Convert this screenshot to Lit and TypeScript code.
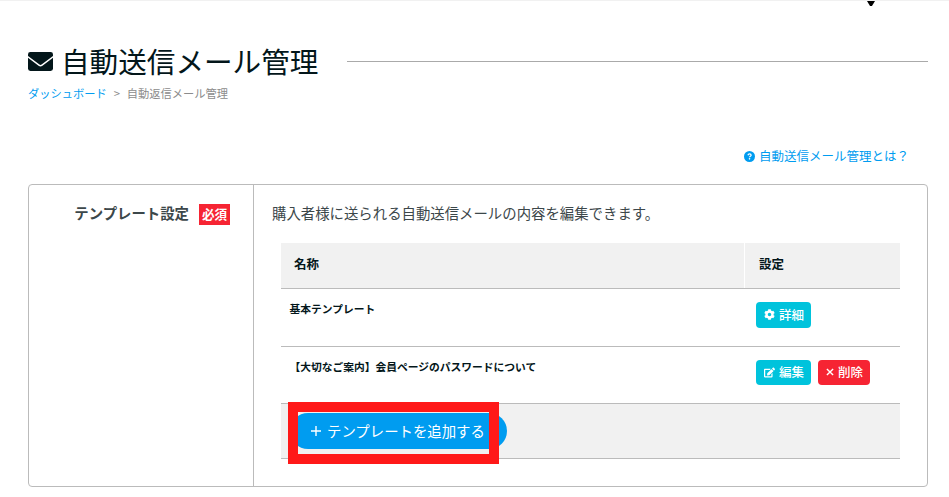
import { LitElement, html, css, svg } from "lit";
import { customElement } from "lit/decorators.js";

const envelope = svg`<svg class="envelope" viewBox="0 0 25 19"><rect width="25" height="19" rx="2.4" fill="#03161a"/><path d="M-.5 4.5 11 13.2Q12.5 14.3 14 13.2L25.5 4.5" fill="none" stroke="#fff" stroke-width="1.5"/></svg>`;

const question = svg`<svg class="question" viewBox="0 0 512 512"><circle cx="256" cy="256" r="256" fill="currentColor"/><path d="M182 196c12-38 40-58 78-58 42 0 72 24 72 58 0 52-72 44-72 100" fill="none" stroke="#fff" stroke-width="58"/><circle cx="258" cy="364" r="38" fill="#fff"/></svg>`;

const gear = svg`<svg class="icon" viewBox="0 0 512 512"><path fill="currentColor" d="M487.4 315.7l-42.6-24.6c4.3-23.2 4.3-47 0-70.2l42.6-24.6c4.9-2.8 7.1-8.6 5.5-14-11.1-35.6-30-67.8-54.7-94.6-3.8-4.1-10-5.1-14.8-2.3L380.8 110c-17.9-15.4-38.5-27.3-60.8-35.1V25.8c0-5.6-3.9-10.5-9.4-11.7-36.7-8.2-74.3-7.8-109.2 0-5.5 1.2-9.4 6.1-9.4 11.7V75c-22.2 7.9-42.8 19.8-60.8 35.1L88.7 85.5c-4.9-2.8-11-1.9-14.8 2.3-24.7 26.7-43.6 58.9-54.7 94.6-1.7 5.4.6 11.2 5.5 14L67.3 221c-4.3 23.2-4.3 47 0 70.2l-42.6 24.6c-4.9 2.8-7.1 8.6-5.5 14 11.1 35.6 30 67.8 54.7 94.6 3.8 4.1 10 5.1 14.8 2.3l42.6-24.6c17.9 15.4 38.5 27.3 60.8 35.1v49.2c0 5.6 3.9 10.5 9.4 11.7 36.7 8.2 74.3 7.8 109.2 0 5.5-1.2 9.4-6.1 9.4-11.7v-49.2c22.2-7.9 42.8-19.8 60.8-35.1l42.6 24.6c4.9 2.8 11 1.9 14.8-2.3 24.7-26.7 43.6-58.9 54.7-94.6 1.5-5.5-.7-11.3-5.6-14.1zM256 336c-44.1 0-80-35.9-80-80s35.9-80 80-80 80 35.9 80 80-35.9 80-80 80z"/></svg>`;

const edit = svg`<svg class="icon" viewBox="0 0 576 512"><path fill="currentColor" d="M402.6 83.2l90.2 90.2c3.8 3.8 3.8 10 0 13.8L274.4 405.6l-92.8 10.3c-12.4 1.4-22.9-9.1-21.5-21.5l10.3-92.8L388.8 83.2c3.8-3.8 10-3.8 13.8 0zm162-22.9l-48.8-48.8c-15.2-15.2-39.9-15.2-55.2 0l-35.4 35.4c-3.8 3.8-3.8 10 0 13.8l90.2 90.2c3.8 3.8 10 3.8 13.8 0l35.4-35.4c15.2-15.3 15.2-40 0-55.2zM384 346.2V448H64V128h229.8c3.2 0 6.2-1.3 8.5-3.5l40-40c7.6-7.6 2.2-20.5-8.5-20.5H48C21.5 64 0 85.5 0 112v352c0 26.5 21.5 48 48 48h352c26.5 0 48-21.5 48-48V306.2c0-10.7-12.9-16-20.5-8.5l-40 40c-2.2 2.3-3.5 5.3-3.5 8.5z"/></svg>`;

const cross = svg`<svg class="cross" viewBox="0 0 8 8"><path d="M.9.9 7.1 7.1M7.1.9.9 7.1" fill="none" stroke="currentColor" stroke-width="1.4"/></svg>`;

const plus = svg`<svg class="plus" viewBox="0 0 10 10"><path d="M5 0V10M0 5H10" fill="none" stroke="currentColor" stroke-width="1.4"/></svg>`;

@customElement("app-root")
export class AppRoot extends LitElement {
  static styles = css`
    :host {
      display: block;
      position: relative;
      box-sizing: border-box;
      height: 497px;
      padding: 0 21px 0 28px;
      overflow: hidden;
      border-top: 1px solid #f1f1f1;
      background: #fff;
      color: #03161a;
      font-family: "Noto Sans CJK JP", sans-serif;
    }
    * { box-sizing: border-box; }
    svg { display: block; flex: none; overflow: visible; }
    .pointer {
      position: absolute;
      left: 867px;
      top: -1px;
      width: 8px;
      height: 6px;
      background: #000;
      clip-path: polygon(0 0, 100% 0, 100% 17%, 62% 100%, 38% 100%, 0 17%);
    }
    .head { display: flex; align-items: center; height: 40px; margin-top: 40px; }
    .envelope { width: 25px; height: 19px; overflow: hidden; }
    .title { margin: 0 0 0 8px; font-size: 28.6px; line-height: 40px; font-weight: 400; white-space: nowrap; }
    .rule { flex: 1; height: 1px; margin-left: 29px; background: #aaa; }
    .crumbs { display: flex; height: 16px; margin-top: 4px; font-size: 11.25px; line-height: 16px; color: #8c8c8c; }
    .link { color: #009cf0; }
    .sep { width: 20px; text-align: center; }
    .help { display: flex; align-items: center; height: 20px; margin: 45px 0 0 716px; font-size: 12.5px; line-height: 18px; white-space: nowrap; }
    .question { width: 11px; height: 11px; margin-right: 4px; }
    .card { display: flex; height: 303px; margin-top: 18px; border: 1px solid #bbb; border-radius: 4px; }
    .side { display: flex; justify-content: flex-end; align-items: flex-start; width: 225px; padding: 19px 23px 0 0; border-right: 1px solid #bbb; color: #3c474a; font-size: 14.4px; line-height: 18px; font-weight: 700; }
    .badge { width: 31px; height: 21px; margin-left: 10px; background: #f62433; color: #fff; text-align: center; font-size: 12.6px; line-height: 20px; }
    .main { flex: 1; padding: 18px 27px 0 18px; }
    .desc { height: 22px; color: #3c474a; font-size: 14.4px; line-height: 20px; }
    .table { margin: 18px 0 0 9px; }
    .row { display: grid; grid-template-columns: 463px 1fr; border-bottom: 1px solid #bbb; }
    .header { height: 46px; background: #f1f1f1; font-size: 12.5px; line-height: 41px; font-weight: 700; }
    .th { padding-left: 13px; }
    .th + .th { padding-left: 14px; border-left: 1px solid #fff; }
    .item { height: 58px; }
    .item.short { height: 57px; }
    .name { padding-left: 8.5px; font-size: 10.76px; line-height: 40px; font-weight: 700; }
    .actions { display: flex; gap: 7px; padding: 13px 0 0 12px; }
    .btn { display: flex; align-items: center; height: 26px; padding: 0 7px 1px 8px; border-radius: 4px; background: #00c3dc; color: #fff; font-size: 12.5px; line-height: 24px; font-weight: 500; }
    .short .btn { height: 25px; }
    .danger { background: #f62433; }
    .icon { width: 11px; height: 11px; margin-right: 4px; }
    .cross { width: 8px; height: 8px; margin-right: 4px; }
    .foot { position: relative; height: 55px; padding: 9px 0 0 9px; border-bottom: 1px solid #bbb; background: #f1f1f1; }
    .add { display: flex; align-items: center; width: 217px; height: 36px; padding-left: 21px; border-radius: 18px; background: #009cf0; color: #fff; font-size: 14.4px; white-space: nowrap; }
    .add span { margin-top: -2px; }
    .plus { width: 10px; height: 10px; margin-right: 6px; }
    .marker { position: absolute; left: 7px; top: -2px; width: 211px; height: 62px; border: 10px solid #ff1919; }
  `;

  render() {
    return html`
      <div class="pointer"></div>
      <header class="head">${envelope}<h1 class="title">自動送信メール管理</h1><div class="rule"></div></header>
      <nav class="crumbs"><span class="link">ダッシュボード</span><span class="sep">&gt;</span><span>自動返信メール管理</span></nav>
      <div class="help link">${question}<span>自動送信メール管理とは？</span></div>
      <section class="card">
        <div class="side"><span>テンプレート設定</span><span class="badge">必須</span></div>
        <div class="main">
          <div class="desc">購入者様に送られる自動送信メールの内容を編集できます。</div>
          <div class="table">
            <div class="row header"><div class="th">名称</div><div class="th">設定</div></div>
            <div class="row item">
              <div class="name">基本テンプレート</div>
              <div class="actions"><span class="btn">${gear}詳細</span></div>
            </div>
            <div class="row item short">
              <div class="name">【大切なご案内】会員ページのパスワードについて</div>
              <div class="actions"><span class="btn">${edit}編集</span><span class="btn danger">${cross}削除</span></div>
            </div>
            <div class="foot"><div class="add">${plus}<span>テンプレートを追加する</span></div><div class="marker"></div></div>
          </div>
        </div>
      </section>
    `;
  }
}
